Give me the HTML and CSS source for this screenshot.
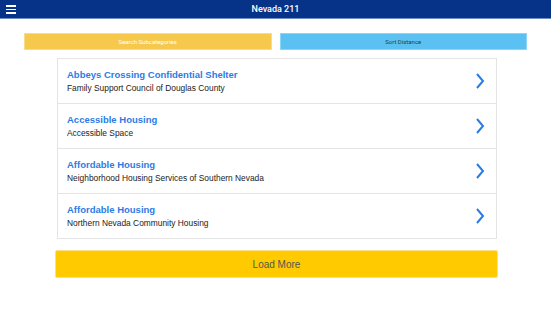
FILE: index.html
```html
<!DOCTYPE html>
<html lang="en">

<head>
    <meta charset="UTF-8" />
    <meta name="viewport" content="width=device-width, initial-scale=1.0" />
    <title>Nevada 211</title>
    <link rel="stylesheet" href="styles.css">
</head>

<body>
    <div id="header">
        <div id="menu">
            <span></span><span></span><span></span>
        </div>
        <h1>Nevada 211</h1>
    </div>
    <div id="filters">
        <button class="filter yellow">Search Subcategories</button>
        <button class="filter blue">Sort Distance</button>
    </div>
    <div id="list">
        <div class="row">
            <div class="info">
                <div class="title">Abbeys Crossing Confidential Shelter</div>
                <div class="sub">Family Support Council of Douglas County</div>
            </div>
            <svg class="chev" width="10" height="18" viewBox="0 0 10 18"><path d="M2 2 L8 9 L2 16" /></svg>
        </div>
        <div class="row">
            <div class="info">
                <div class="title">Accessible Housing</div>
                <div class="sub">Accessible Space</div>
            </div>
            <svg class="chev" width="10" height="18" viewBox="0 0 10 18"><path d="M2 2 L8 9 L2 16" /></svg>
        </div>
        <div class="row">
            <div class="info">
                <div class="title">Affordable Housing</div>
                <div class="sub">Neighborhood Housing Services of Southern Nevada</div>
            </div>
            <svg class="chev" width="10" height="18" viewBox="0 0 10 18"><path d="M2 2 L8 9 L2 16" /></svg>
        </div>
        <div class="row">
            <div class="info">
                <div class="title">Affordable Housing</div>
                <div class="sub">Northern Nevada Community Housing</div>
            </div>
            <svg class="chev" width="10" height="18" viewBox="0 0 10 18"><path d="M2 2 L8 9 L2 16" /></svg>
        </div>
    </div>
    <button id="more">Load More</button>
</body>

</html>
```

FILE: styles.css
```css
body {
    margin: 0;
    width: 551px;
    font-family: "Liberation Sans", Arial, sans-serif;
    background: #fff;
}

#header {
    height: 18px;
    background-color: #063388;
    border-bottom: 1px solid #6f8cc6;
    display: flex;
    align-items: center;
    justify-content: center;
    position: relative;
}

#header h1 {
    margin: 0;
    color: white;
    font-size: 9px;
    font-weight: 500;
    font-family: Roboto, "Liberation Sans", sans-serif;
}

#menu {
    position: absolute;
    left: 6px;
    top: 5px;
    width: 10px;
    display: flex;
    flex-direction: column;
    gap: 2px;
}

#menu span {
    height: 1.5px;
    background: white;
}

#filters {
    display: flex;
    gap: 8px;
    padding: 0 24px;
    margin-top: 14px;
}

.filter {
    flex: 1;
    height: 17px;
    border: 1px solid;
    font-size: 6px;
    font-family: Roboto, "Liberation Sans", sans-serif;
    padding: 0;
}

.yellow {
    background-color: #f6c84c;
    border-color: #fadb8a;
    color: white;
}

.blue {
    background-color: #5bc0f2;
    border-color: #8dd5f7;
    color: #244;
}

#list {
    margin: 8px 0 0 57px;
    width: 438px;
    border: 1px solid #e4e4e4;
}

.row {
    height: 44px;
    display: flex;
    align-items: center;
    justify-content: space-between;
    padding: 0 10px 0 9px;
    border-bottom: 1px solid #e4e4e4;
}

.row:last-child {
    border-bottom: none;
}

.title {
    color: #2c7be5;
    font-weight: bold;
    font-size: 9.5px;
    line-height: 12px;
}

.sub {
    color: #222;
    font-size: 8.4px;
    margin-top: 2px;
    line-height: 11px;
}

.chev {
    margin-right: 1px;
}

.chev path {
    fill: none;
    stroke: #2a7be6;
    stroke-width: 2;
}

#more {
    display: block;
    margin: 11px 0 0 55px;
    width: 443px;
    height: 28px;
    background-color: #ffca00;
    border: 1px solid #ffe08a;
    border-radius: 2px;
    color: #555;
    font-size: 10px;
    font-family: "Liberation Sans", Arial, sans-serif;
}
```
